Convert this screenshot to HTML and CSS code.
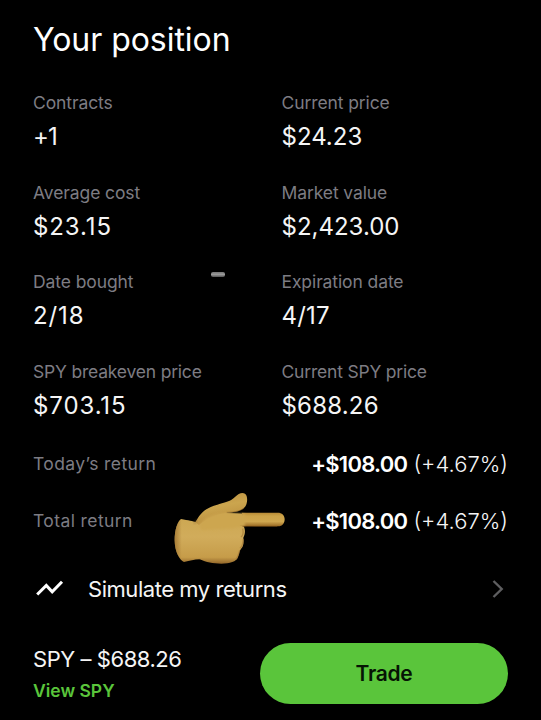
FILE: index.html
```html
<!DOCTYPE html>
<html lang="en">
<head>
<meta charset="utf-8">
<meta name="viewport" content="width=device-width, initial-scale=1">
<title>Your position</title>
<link rel="stylesheet" href="styles.css">
</head>
<body>
<main class="screen">
  <h1 class="title">Your position</h1>
  <dl class="stats">
    <div class="stat"><dt>Contracts</dt><dd class="tight">+1</dd></div>
    <div class="stat"><dt>Current price</dt><dd>$24.23</dd></div>
    <div class="stat"><dt>Average cost</dt><dd class="wide">$23.15</dd></div>
    <div class="stat"><dt>Market value</dt><dd>$2,423.00</dd></div>
    <div class="stat"><dt>Date bought</dt><dd class="wide">2/18</dd></div>
    <div class="stat"><dt>Expiration date</dt><dd class="slight">4/17</dd></div>
    <div class="stat"><dt class="long">SPY breakeven price</dt><dd class="wide">$703.15</dd></div>
    <div class="stat"><dt class="long">Current SPY price</dt><dd class="slight">$688.26</dd></div>
  </dl>
  <section class="returns">
    <div class="return-row"><span class="label">Today’s return</span><span class="amount"><strong>+$108.00</strong> <span class="percent">(+4.67%)</span></span></div>
    <div class="return-row"><span class="label">Total return</span><span class="amount"><strong>+$108.00</strong> <span class="percent">(+4.67%)</span></span></div>
  </section>
  <a class="simulate">
    <svg class="trend" viewBox="0 0 30 20" aria-hidden="true"><path d="M2.2 15.5 L11.3 6.4 L17.2 12.8 L27 2.8"/></svg>
    <span class="simulate-text">Simulate my returns</span>
    <svg class="chevron" viewBox="0 0 12 20" aria-hidden="true"><path d="M1.5 2 L9.7 10 L1.5 18"/></svg>
  </a>
  <footer class="footer">
    <div class="quote">
      <span class="quote-price">SPY – $688.26</span>
      <a class="quote-link">View SPY</a>
    </div>
    <button class="trade" type="button">Trade</button>
  </footer>
  <span class="dash"></span>
  <svg class="hand" viewBox="0 0 390 285" aria-hidden="true">
    <defs>
      <linearGradient id="palm" gradientUnits="userSpaceOnUse" x1="0" y1="90" x2="0" y2="251">
        <stop offset="0" stop-color="#cba54e"/><stop offset=".5" stop-color="#d1ac5b"/><stop offset=".88" stop-color="#c69c49"/><stop offset="1" stop-color="#93672a"/>
      </linearGradient>
      <linearGradient id="finger" x1="0" y1="0" x2="0" y2="1">
        <stop offset="0" stop-color="#b88a35"/><stop offset=".25" stop-color="#cca349"/><stop offset=".65" stop-color="#cfa74f"/><stop offset="1" stop-color="#996822"/>
      </linearGradient>
      <linearGradient id="edge" x1="0" y1="0" x2="1" y2="0">
        <stop offset="0" stop-color="#9c6f2c" stop-opacity=".75"/><stop offset=".22" stop-color="#9c6f2c" stop-opacity="0"/>
      </linearGradient>
      <linearGradient id="thumb" x1="0" y1="0" x2=".3" y2="1">
        <stop offset="0" stop-color="#b98d3f"/><stop offset=".5" stop-color="#cba54e"/><stop offset="1" stop-color="#bb8f3e"/>
      </linearGradient>
      <filter id="soft" x="-20%" y="-20%" width="140%" height="140%"><feGaussianBlur stdDeviation="3"/></filter>
    </defs>
    <path fill="url(#palm)" d="M48 117 C70 121 85 123 92 127 L105 238 C86 239 76 242 57 246 C44 241 29 215 29 181 C29 151 37 124 48 117Z"/>
    <path fill="url(#palm)" d="M90 127 C108 106 130 97 165 98 L232 101 L235 138 C241 146 242 160 235 173 C237 187 236 198 228 207 C222 213 224 221 219 231 C214 245 195 251 169 251 C142 251 125 247 104 238 C87 215 80 160 90 127Z"/>
    <path fill="url(#edge)" d="M48 117 C70 121 85 123 105 121 L125 240 C95 239 76 242 57 246 C44 241 29 215 29 181 C29 151 37 124 48 117Z"/>
    <path fill="url(#finger)" d="M230 98 L338 98 C351 98 359 106 359 118 C359 131 351 140 338 139 L224 138 C234 125 236 112 230 98Z"/>
    <path fill="url(#thumb)" d="M92 127 C106 96 126 82 157 74 C181 68 198 63 209 52 C221 40 231 36 240 41 C248 46 248 65 243 76 C236 89 220 96 190 98 C160 101 130 112 102 135Z"/>
    <path d="M102 135 C125 108 151 100 190 99 L240 102 L240 137 L200 145 L110 150Z" fill="#cda64f" filter="url(#soft)"/>
    <path d="M185 97 C212 96 228 92 237 84" fill="none" stroke="#94692c" stroke-width="3" opacity=".55"/>
    <path d="M232 139 L337 139" fill="none" stroke="#875719" stroke-width="3" opacity=".55"/>
    <path d="M96 119 C94 124 91 128 87 131" fill="none" stroke="#89602a" stroke-width="5" opacity=".45" filter="url(#soft)"/>
    <path d="M233 146 C236 158 235 166 228 171 M235 177 C234 190 232 199 225 205 M224 211 C221 222 218 232 212 239" fill="none" stroke="#a17433" stroke-width="4" opacity=".6"/>
  </svg>
</main>
</body>
</html>
```
FILE: styles.css
```css
* { box-sizing: border-box; }
body { margin: 0; background: #000; font-family: Inter, "Liberation Sans", sans-serif; color: #f5f5f5; }
.screen { position: relative; width: 541px; height: 720px; padding: 20px 33px 0; overflow: hidden; }
.title { margin: 0 0 31px; font-size: 32px; line-height: 40px; font-weight: 400; letter-spacing: -0.05px; color: #fff; }
.stats { display: grid; grid-template-columns: 1fr 1fr; column-gap: 22px; row-gap: 27.5px; margin: 0; }
.stat { height: 62px; }
.stat dt { font-size: 17.5px; line-height: 24px; color: #7d7c83; font-weight: 400; letter-spacing: -0.1px; }
.stat .long { letter-spacing: -0.2px; }
.stat dd { margin: 6px 0 0; font-size: 24px; line-height: 32px; font-weight: 400; letter-spacing: 0; }
.stat .tight { letter-spacing: -1px; }
.stat .wide { letter-spacing: 0.9px; }
.stat .slight { letter-spacing: 0.2px; }
.returns { margin-top: 13.5px; }
.return-row { display: flex; justify-content: space-between; align-items: center; height: 57px; }
.label { font-size: 17.5px; color: #7d7c83; letter-spacing: 0.4px; }
.amount { font-size: 22px; white-space: nowrap; }
.amount strong { font-weight: 600; color: #fff; letter-spacing: -0.75px; }
.percent { font-weight: 300; }
.simulate { display: flex; align-items: center; height: 60px; margin-top: 10px; }
.trend { width: 30px; height: 20px; margin: 0 23px 0 2px; fill: none; stroke: #fff; stroke-width: 3; }
.simulate-text { flex: 1; font-size: 22px; font-weight: 400; letter-spacing: -0.45px; }
.chevron { width: 12px; height: 20px; margin-right: 4px; fill: none; stroke: #5e5e60; stroke-width: 2.4; }
.footer { display: flex; justify-content: space-between; margin-top: 24px; }
.quote { display: flex; flex-direction: column; }
.quote-price { font-size: 22px; line-height: 32px; font-weight: 400; letter-spacing: -0.45px; }
.quote-link { font-size: 17.5px; line-height: 32px; font-weight: 600; color: #5ac53b; }
.trade { width: 248px; height: 61px; padding: 0; border: 0; border-radius: 31px; background: #5ac53b; color: #061404; font: 600 21px Inter, sans-serif; letter-spacing: -0.3px; }
.dash { position: absolute; left: 211px; top: 272px; width: 14px; height: 5px; border-radius: 2px; background: linear-gradient(#777, #999 50%, #555); }
.hand { position: absolute; left: 165px; top: 480px; width: 130px; height: 95px; }
```
